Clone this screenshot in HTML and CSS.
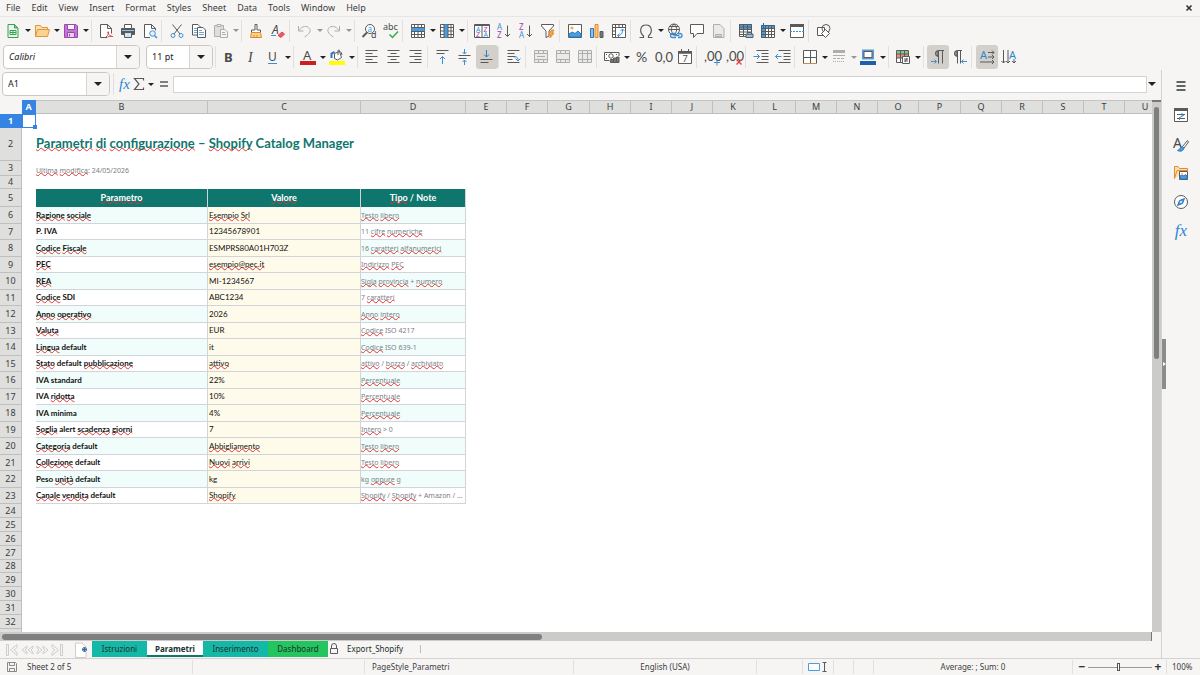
FILE: index.html
```
<!DOCTYPE html>
<html lang="en">
<head>
<meta charset="utf-8">
<meta name="viewport" content="width=device-width, initial-scale=1">
<title>Shopify Catalog Manager</title>
<link rel="stylesheet" href="styles.css">
</head>
<body>
<nav class="menubar">
  <button>File</button><button>Edit</button><button>View</button><button>Insert</button><button>Format</button><button>Styles</button><button>Sheet</button><button>Data</button><button>Tools</button><button>Window</button><button>Help</button>
  <button class="close" aria-label="Close"><svg viewBox="0 0 8 8" width="8" height="8"><path d="M1.500 1.500l5 5M6.500 1.500l-5 5" stroke="#2e3436" stroke-width="1.600"/></svg></button>
</nav>

<div class="toolbar standard" role="toolbar" aria-label="Standard">
  <button class="tb" aria-label="New"><svg viewBox="0 0 16 16"><path d="M3 1.500h6.500l3.500 3.500v9.500H3z" fill="#e9f6ec" stroke="#3aa055"/><path d="M9.500 1.500V5H13z" fill="#8fce9f" stroke="#3aa055"/><path d="M5 7.500h6v4H5zM5 9.500h6M8 7.500v4" fill="#fff" stroke="#3aa055"/></svg></button><button class="dd" aria-label="New options"></button>
  <button class="tb" aria-label="Open"><svg viewBox="0 0 16 16"><path d="M1.500 13.500V2.500h5l1.500 2h5.500v2" fill="#fbe0b4" stroke="#e0963a"/><path d="M1.500 13.500l2-7h12l-2 7z" fill="#fbd38f" stroke="#e0963a"/></svg></button><button class="dd" aria-label="Open options"></button>
  <button class="tb" aria-label="Save"><svg viewBox="0 0 16 16"><path d="M1.500 1.500h11.500l1.500 1.500v11.500h-13z" fill="#c277d3" stroke="#9a48ad"/><path d="M4.500 1.500h7v5h-7z" fill="#fff" stroke="#9a48ad"/><path d="M4.500 9.500h7v5h-7z" fill="#e9d0ef" stroke="#9a48ad"/><path d="M6.500 11v2.500" stroke="#9a48ad"/></svg></button><button class="dd" aria-label="Save options"></button>
  <i class="sep wide"></i>
  <button class="tb" aria-label="Export PDF"><svg viewBox="0 0 16 16"><path d="M9 14.500H2.500v-13h7l4 4v5M9.500 1.500v4h4" fill="#fff"/><path d="M8 14c2-1.500 3-4 2.500-5s-1.500.5 0 2 2 2 4 2.500-2-1-5 .5" stroke="#dc4446"/></svg></button>
  <button class="tb" aria-label="Print"><svg viewBox="0 0 16 16"><path d="M4.500 5V1.500h7V5" fill="#fff"/><rect x="1" y="5" width="14" height="7" rx="1" fill="#585858" stroke="none"/><path d="M2 7.500h12" stroke="#8fc1ea"/><path d="M4.500 9.500h7v5h-7z" fill="#cfe4f7"/></svg></button>
  <button class="tb" aria-label="Print preview"><svg viewBox="0 0 16 16"><path d="M8 14.500H2.500v-13h7l4 4v2M9.500 1.500v4h4" fill="#fff"/><circle cx="10.500" cy="10.500" r="2.800" fill="#e3f0fb" stroke="#3a8fd6"/><path d="M12.700 12.700l2.300 2.300" stroke="#3a8fd6" stroke-width="1.500"/></svg></button>
  <i class="sep"></i>
  <button class="tb" aria-label="Cut"><svg viewBox="0 0 16 16"><path d="M3.500 1.500l7.500 9.500M12.500 1.500L5 11"/><circle cx="4" cy="12.500" r="2" stroke="#3a8fd6"/><circle cx="12" cy="12.500" r="2" stroke="#3a8fd6"/></svg></button>
  <button class="tb" aria-label="Copy"><svg viewBox="0 0 16 16"><path d="M1.500 1.500h5.500l3 3v7.500h-8.500z" fill="#fff"/><path d="M3 5.500h4M3 7.500h3M3 9.500h3" stroke="#6aa9de"/><path d="M6.500 4.500H12l2.500 2.500v7.500h-8z" fill="#fff"/><path d="M8 7.500h3M8 9.500h5M8 11.500h5" stroke="#6aa9de"/></svg></button>
  <button class="tb faded" aria-label="Paste" disabled><svg viewBox="0 0 16 16"><path d="M1.500 2.500h9v11h-9z" fill="#c4c4c2"/><path d="M4 1.500h4v2H4z" fill="#eee"/><path d="M7.500 6.500H12l2.500 2.500v5.500h-7z" fill="#f5f5f4"/><path d="M9 9.500h3M9 11.500h4"/></svg></button><button class="dd faded" aria-label="Paste options" disabled></button>
  <i class="sep wide"></i>
  <button class="tb" aria-label="Clone formatting"><svg viewBox="0 0 16 16"><path d="M7 1.500h2V7h3.500v2.500h-9V7H7z" fill="#fff"/><path d="M3.500 9.500L2.500 14.500h11l-1-5z" fill="#fbd38f" stroke="#e58a2b"/><path d="M6 14v-2M9 14v-2" stroke="#e58a2b"/></svg></button>
  <button class="tb" aria-label="Clear formatting"><svg viewBox="0 0 16 16"><text x="2" y="11" font-size="12" font-style="italic" class="ltr">A</text><path d="M1 12.500h5" stroke="#3a8fd6"/><path d="M8 12.500l4-3.500 2.500 2-3.500 3.500z" fill="#f05a60" stroke="#dc4446"/></svg></button>
  <i class="sep"></i>
  <button class="tb faded" aria-label="Undo" disabled><svg viewBox="0 0 16 16"><path d="M1.500 3v5h5M2 7.500C5 3 10 2 12.500 5.500c2 3-1 6-5 8.500"/></svg></button><button class="dd faded" aria-label="Undo options" disabled></button>
  <button class="tb faded" aria-label="Redo" disabled><svg viewBox="0 0 16 16"><path d="M13.500 3v5h-5M13 7.500C10 3 5 2 2.500 5.500c-2 3 1 6 5 8.500"/></svg></button><button class="dd faded" aria-label="Redo options" disabled></button>
  <i class="sep wide"></i>
  <button class="tb" aria-label="Find and replace"><svg viewBox="0 0 16 16"><circle cx="9" cy="6" r="4.500" fill="#fff"/><text x="6.500" y="8.500" font-size="8" fill="#3a8fd6">a</text><path d="M6 9.500L1.500 14" stroke-width="2"/><text x="10" y="15" font-size="9" class="ltr">d</text></svg></button>
  <button class="tb" aria-label="Spelling"><svg viewBox="0 0 16 16"><text x="0" y="7" font-size="9" class="ltr">abc</text><path d="M6.500 11.500l3 3L15 8.500" stroke="#36a853" stroke-width="1.500"/></svg></button>
  <i class="sep"></i>
  <button class="tb" aria-label="Row"><svg viewBox="0 0 16 16"><path d="M1.500 1.500h13v13h-13z" fill="#fff"/><path d="M1.500 4.500h13v4h-13z" fill="#4a9de0" stroke="none"/><path d="M1.500 4.500h13M1.500 8.500h13M1.500 11.500h13M4.500 1.500v3M8 1.500v3M11.500 1.500v3M4.500 8.500v6M8 8.500v6M11.500 8.500v6"/></svg></button><button class="dd" aria-label="Row options"></button>
  <button class="tb" aria-label="Column"><svg viewBox="0 0 16 16"><path d="M1.500 1.500h13v13h-13z" fill="#fff"/><path d="M5 1.500h4v13H5z" fill="#4a9de0" stroke="none"/><path d="M5 1.500v13M9 1.500v13M12 1.500v13M1.500 4.500H5M1.500 8H5M1.500 11.500H5M9 4.500h5.500M9 8h5.500M9 11.500h5.500"/></svg></button><button class="dd" aria-label="Column options"></button>
  <i class="sep wide"></i>
  <button class="tb" aria-label="Sort"><svg viewBox="0 0 16 16"><path d="M.5 1.500h15v13H.5zM8 3v11.500M.5 2.500h15" fill="#fff"/><text x="2" y="8.500" font-size="7" fill="#3a8fd6">A</text><text x="2" y="14" font-size="7" fill="#a040b0">Z</text><text x="9.500" y="8.500" font-size="7" fill="#a040b0">Z</text><text x="9.500" y="14" font-size="7" fill="#3a8fd6">A</text></svg></button>
  <button class="tb" aria-label="Sort ascending"><svg viewBox="0 0 16 16"><text x="1" y="7" font-size="8" fill="#3a8fd6">A</text><text x="1" y="15" font-size="8" fill="#a040b0">Z</text><path d="M11.500 2.500v11M9 11l2.500 2.500L14 11"/></svg></button>
  <button class="tb" aria-label="Sort descending"><svg viewBox="0 0 16 16"><text x="1" y="7" font-size="8" fill="#a040b0">Z</text><text x="1" y="15" font-size="8" fill="#3a8fd6">A</text><path d="M11.500 2.500v11M9 11l2.500 2.500L14 11"/></svg></button>
  <button class="tb" aria-label="AutoFilter"><svg viewBox="0 0 16 16"><path d="M1.500 1.500h12v1.500l-4.500 5v5l-3 1.500V8L1.500 3z" fill="#fff"/><path d="M11.500 7l-3 5h2l-.5 3 4-5h-2l2-3z" fill="#f7a944" stroke="#e58a2b"/></svg></button>
  <i class="sep"></i>
  <button class="tb" aria-label="Image"><svg viewBox="0 0 16 16"><path d="M1.500 1.500h13v13h-13z" fill="#fff"/><circle cx="5" cy="5" r="1.500" fill="#f7a944" stroke="none"/><path d="M2 14l0-3 3-2 3 1.500L11 8l3 3v3z" fill="#4a9de0" stroke="#2a78bd"/></svg></button>
  <button class="tb" aria-label="Chart"><svg viewBox="0 0 16 16"><path d="M1.500 5.500h3v9h-3z" fill="#8cc0ee" stroke="#2a78bd"/><path d="M6 1.500h3v13H6z" fill="#fbc77a" stroke="#e58a2b"/><path d="M11 8.500h3v6h-3z" fill="#777"/></svg></button>
  <button class="tb" aria-label="Pivot table"><svg viewBox="0 0 16 16"><path d="M1.500 1.500h13v13h-13zM1.500 4.500h13M4.500 1.500v13M8 1.500v3M11.500 1.500v3M1.500 8h3M1.500 11.500h3" fill="#fff"/><path d="M6.500 12.500c4 0 5-2 5-6M9.500 8l2-2 2 2M8.500 10.500l-2 2 2 2" stroke="#3a8fd6"/></svg></button>
  <i class="sep"></i>
  <button class="tb" aria-label="Special character"><svg viewBox="0 0 16 16"><path d="M1.500 14.500h4v-1.500C1 9 2 2 8 2s7 7 2.500 11v1.500h4" stroke-width="1.200"/></svg></button><button class="dd" aria-label="Special character options"></button>
  <button class="tb" aria-label="Hyperlink"><svg viewBox="0 0 16 16"><circle cx="7" cy="6.500" r="5.500"/><path d="M1.500 6.500h11M2.500 3.500h9M7 1c-4 4-3 8 0 11M7 1c4 4 3 8 0 11"/><path d="M9 10.500H5.500a2 2 0 000 4H9M11 10.500h2a2 2 0 010 4h-2M7.500 12.500h5" stroke="#3a8fd6" stroke-width="1.300"/></svg></button>
  <button class="tb" aria-label="Comment"><svg viewBox="0 0 16 16"><path d="M1.500 1.500h13v9H8l-3.500 4v-4h-3z" fill="#fff"/></svg></button>
  <button class="tb faded" aria-label="Header and footer" disabled><svg viewBox="0 0 16 16"><path d="M2.500 1.500H9l4 4v9H2.500z" fill="#ddd"/><path d="M4.500 11.500h6v2h-6z" fill="#bbb"/></svg></button>
  <i class="sep"></i>
  <button class="tb" aria-label="Print area"><svg viewBox="0 0 16 16"><path d="M1.500 1.500h12v12h-12z" fill="#fff"/><path d="M1.500 1.500h12v5h-12z" fill="#4a9de0"/><path d="M1.500 4h12M1.500 6.500h12M1.500 9h12M1.500 11.500h12M5.500 1.500v12M9.500 1.500v12"/><path d="M8 11h7v3.500H8z" fill="#8fc1ea"/><path d="M9.500 9.500h4V11h-4z" fill="#fff"/></svg></button>
  <button class="tb" aria-label="Freeze rows and columns"><svg viewBox="0 0 16 16"><path d="M1.500 2.500h13v12h-13z" fill="#fff"/><path d="M1.500 2.500h13v3h-9v9h-4z" fill="#4a9de0"/><path d="M1.500 5.500h13M1.500 8.500h13M1.500 11.500h13M5.500 2.500v12M8.500 2.500v12M11.500 2.500v12"/><path d="M3.500 0v5M1 2.500h5" stroke="#1f6cb0"/></svg></button><button class="dd" aria-label="Freeze options"></button>
  <button class="tb" aria-label="Split window"><svg viewBox="0 0 16 16"><path d="M1.500 1.500h13v13h-13z" fill="#fff"/><path d="M1 2.500h14" stroke-width="3"/><path d="M1 8.500h14" stroke="#3a8fd6" stroke-dasharray="2 1"/></svg></button>
  <i class="sep"></i>
  <button class="tb" aria-label="Show draw functions"><svg viewBox="0 0 16 16"><path d="M1.500 4.500h7v8h-7z" fill="#fff"/><circle cx="10" cy="5.500" r="4"/><path d="M9.500 6.500l4 4-4 4-4-4z" fill="#fff"/></svg></button>
</div>

<div class="toolbar formatting" role="toolbar" aria-label="Formatting">
  <div class="combo fontname"><input type="text" value="Calibri" aria-label="Font name"><button aria-label="Font list"></button></div>
  <div class="combo fontsize"><input type="text" value="11 pt" aria-label="Font size"><button aria-label="Font size list"></button></div>
  <i class="sep"></i>
  <button class="tb" aria-label="Bold"><svg viewBox="0 0 16 16"><text x="3" y="13" font-size="13" font-weight="700" class="ltr">B</text></svg></button>
  <button class="tb" aria-label="Italic"><svg viewBox="0 0 16 16"><text x="5" y="13" font-size="14" font-style="italic" class="ltr serif">I</text></svg></button>
  <button class="tb" aria-label="Underline"><svg viewBox="0 0 16 16"><text x="3" y="12" font-size="12" class="ltr">U</text><path d="M3 14.500h9" stroke="#3a8fd6"/></svg></button><button class="dd" aria-label="Underline options"></button>
  <i class="sep wide"></i>
  <button class="tb" aria-label="Font color"><svg viewBox="0 0 16 16"><text x="3" y="11" font-size="13" class="ltr">A</text><path d="M0 14h16" stroke="#c9211e" stroke-width="4"/></svg></button><button class="dd" aria-label="Font color options"></button>
  <button class="tb" aria-label="Highlighting color"><svg viewBox="0 0 16 16"><path d="M5.500 4.500l5-2 2 6-4 2.500-3-1.500z" fill="#fff"/><path d="M9 6V1.500c1-1 2 0 2 1.500M12 3l1 3"/><path d="M2.500 9V4.500l3-1.500" stroke="#2a78bd" stroke-width="2"/><path d="M0 14h16" stroke="#ffff00" stroke-width="4"/></svg></button><button class="dd" aria-label="Highlighting options"></button>
  <i class="sep wide"></i>
  <button class="tb" aria-label="Align left"><svg viewBox="0 0 16 16"><path d="M1.500 1.500h12M1.500 4.500h7M1.500 7.500h12M1.500 10.500h7M1.500 13.500h12"/></svg></button>
  <button class="tb" aria-label="Center"><svg viewBox="0 0 16 16"><path d="M1.500 1.500h12M4.500 4.500h6M1.500 7.500h12M4.500 10.500h6M1.500 13.500h12"/></svg></button>
  <button class="tb" aria-label="Align right"><svg viewBox="0 0 16 16"><path d="M1.500 1.500h12M6.500 4.500h7M1.500 7.500h12M6.500 10.500h7M1.500 13.500h12"/></svg></button>
  <i class="sep"></i>
  <button class="tb" aria-label="Align top"><svg viewBox="0 0 16 16"><path d="M1.500 1.500h12M1.500 4.500h8"/><path d="M7.500 15V7.500M5 10l2.500-2.500L10 10" stroke="#3a8fd6"/></svg></button>
  <button class="tb" aria-label="Center vertically"><svg viewBox="0 0 16 16"><path d="M1.500 6.500h12M1.500 9.500h8"/><path d="M7.500 0v5M5.500 3l2 2 2-2M7.500 16v-5M5.500 13l2-2 2 2" stroke="#3a8fd6"/></svg></button>
  <button class="tb on" aria-label="Align bottom" aria-pressed="true"><svg viewBox="0 0 16 16"><path d="M1.500 10.500h12M1.500 13.500h8"/><path d="M7.500 1v7M5 5.500L7.500 8 10 5.500" stroke="#2a78bd"/></svg></button>
  <i class="sep"></i>
  <button class="tb" aria-label="Wrap text"><svg viewBox="0 0 16 16"><path d="M1.500 1.500h12M1.500 4.500h7M1.500 7.500h8M1.500 10.500h5M1.500 13.500h12"/><path d="M8 8c3-1 4 1 4 3M9.500 9.500l2.500 2.500 2.500-2.500" stroke="#3a8fd6"/></svg></button>
  <i class="sep"></i>
  <button class="tb faded" aria-label="Merge and center" disabled><svg viewBox="0 0 16 16"><path d="M1.500 1.500h13v12h-13zM1.500 4.500h13v6h-13zM5.500 1.500v3M10.500 1.500v3M5.500 10.500v3M10.500 10.500v3M4 7.500h8" fill="#ddd"/></svg></button>
  <button class="tb faded" aria-label="Merge cells" disabled><svg viewBox="0 0 16 16"><path d="M1.500 1.500h13v12h-13zM1.500 4.500h13v6h-13zM5.500 1.500v3M10.500 1.500v3M5.500 10.500v3M10.500 10.500v3" fill="#ddd"/></svg></button>
  <button class="tb faded" aria-label="Unmerge cells" disabled><svg viewBox="0 0 16 16"><path d="M1.500 1.500h13v12h-13zM1.500 4.500h13v6h-13zM5.500 1.500v12M10.500 1.500v12" fill="#ddd"/></svg></button>
  <i class="sep"></i>
  <button class="tb" aria-label="Currency"><svg viewBox="0 0 16 16"><path d="M15 7V3.500H.5v8h5" fill="#fff"/><circle cx="7" cy="7" r="2.200"/><path d="M2 5.500h1M2 9.500h1M12 5.500h1"/><path d="M6.500 10.500h3v3h-3zM9.500 9h3v4.500h-3zM12.500 8H15v5.500h-2.500z" fill="#777"/></svg></button><button class="dd" aria-label="Currency options"></button>
  <button class="tb" aria-label="Percent"><svg viewBox="0 0 16 16"><text x="3" y="13" font-size="14" class="ltr lato">%</text></svg></button>
  <button class="tb" aria-label="Number"><svg viewBox="0 0 16 16"><text x="0" y="13" font-size="13" class="ltr lato">0,0</text></svg></button>
  <button class="tb" aria-label="Date"><svg viewBox="0 0 16 16"><path d="M1.500 2.500h13v12h-13z" fill="#fff"/><path d="M1 3.500h14" stroke-width="2.500"/><path d="M4.500 0v3M11.500 0v3"/><text x="5.500" y="13" font-size="9" class="ltr lato">7</text></svg></button>
  <i class="sep"></i>
  <button class="tb" aria-label="Add decimal place"><svg viewBox="0 0 16 16"><text x="0" y="12" font-size="13" class="ltr lato">,00</text><path d="M10 13.500h6M13 10.500v6" stroke="#3a8fd6"/></svg></button>
  <button class="tb" aria-label="Delete decimal place"><svg viewBox="0 0 16 16"><text x="0" y="12" font-size="13" class="ltr lato">,00</text><path d="M10.500 10.500l5 5M15.500 10.500l-5 5" stroke="#e03e3e" stroke-width="1.300"/></svg></button>
  <i class="sep"></i>
  <button class="tb" aria-label="Increase indent"><svg viewBox="0 0 16 16"><path d="M3.500 1.500h12M8.500 4.500h7M8.500 7.500h7M8.500 10.500h7M3.500 13.500h12"/><path d="M.5 7.500h6M4 5l2.500 2.500L4 10" stroke="#3a8fd6"/></svg></button>
  <button class="tb" aria-label="Decrease indent"><svg viewBox="0 0 16 16"><path d="M3.500 1.500h12M8.500 4.500h7M8.500 7.500h7M8.500 10.500h7M3.500 13.500h12"/><path d="M.5 7.500h6M3 5L.5 7.500 3 10" stroke="#3a8fd6"/></svg></button>
  <i class="sep"></i>
  <button class="tb" aria-label="Borders"><svg viewBox="0 0 16 16"><path d="M1.500 1.500h13v13h-13zM8.500 1.500v13M1.500 8.500h13" fill="#fff"/><path d="M1 14.500h14" stroke="#c98a50"/></svg></button><button class="dd" aria-label="Border options"></button>
  <button class="tb faded" aria-label="Border style" disabled><svg viewBox="0 0 16 16"><path d="M2 2.500h12" stroke-width="3"/><path d="M2 6.500h12"/><path d="M2 9.500h12" stroke-dasharray="3 1"/><path d="M2 12.500h12" stroke-dasharray="1 1"/></svg></button><button class="dd faded" aria-label="Border style options" disabled></button>
  <button class="tb" aria-label="Border color"><svg viewBox="0 0 16 16"><path d="M3 1.500h10v8H3z" fill="#fff" stroke="#5a9bd5" stroke-width="2"/><path d="M4 2.500h8v6H4z"/><path d="M0 14h16" stroke="#1f5fa5" stroke-width="4"/></svg></button><button class="dd" aria-label="Border color options"></button>
  <i class="sep wide"></i>
  <button class="tb" aria-label="Conditional formatting"><svg viewBox="0 0 16 16"><path d="M1.500 1.500h12v12h-12z" fill="#fff"/><path d="M2 2h11v3H2z" fill="#7cc98f" stroke="none"/><path d="M2 5h11v4H2z" fill="#ee8a80" stroke="none"/><path d="M1.500 5h12M1.500 9h12M5.500 1.500v12M9.500 1.500v12"/><path d="M7.500 7.500h7v7h-7z" fill="#fff"/><path d="M9 10h4M9 12h4M12 9l-2 4"/></svg></button><button class="dd" aria-label="Conditional options"></button>
  <i class="sep wide"></i>
  <button class="tb on" aria-label="Left to right" aria-pressed="true"><svg viewBox="0 0 16 16"><path d="M14 1.500H8.500a3 3 0 000 6M8.500 1.500v13M12.500 1.500v13"/><path d="M8 2v5a2.500 2.500 0 010-5z" fill="#999"/><path d="M1 12.500h5.500M4.500 10.500l2 2-2 2" stroke="#3a8fd6"/></svg></button>
  <button class="tb" aria-label="Right to left"><svg viewBox="0 0 16 16"><path d="M10 1.500H5.500a3 3 0 000 6M5.500 1.500v13M8.500 1.500v13"/><path d="M5 2v5a2.500 2.500 0 010-5z" fill="#999"/><path d="M9.500 12.500H15M11.500 10.500l-2 2 2 2" stroke="#3a8fd6"/></svg></button>
  <i class="sep"></i>
  <button class="tb on" aria-label="Horizontal text" aria-pressed="true"><svg viewBox="0 0 16 16"><text x="1" y="10" font-size="11" fill="#2a88d0">A</text><path d="M9 3.500h6M13 1.500l2 2-2 2M9 8h6M13 6l2 2-2 2M1 13h14M13 11l2 2-2 2"/></svg></button>
  <button class="tb" aria-label="Vertical text"><svg viewBox="0 0 16 16"><text x="8" y="10" font-size="11" fill="#2a88d0">A</text><path d="M2.500 1v13M.5 12l2 2 2-2M7 1v13M5 12l2 2 2-2M13 10v4M11 12l2 2 2-2"/></svg></button>
</div>

<div class="workspace">
  <main class="document">
    <div class="formulabar">
      <div class="combo namebox"><input type="text" value="A1" aria-label="Name box"><button aria-label="Cell names"></button></div>
      <i class="sep"></i>
      <button class="fx" aria-label="Function wizard">fx</button>
      <button class="fb" aria-label="Select function"><svg viewBox="0 0 12 14" width="12" height="14"><path d="M10.500 3.500v-2H1.500L6 7l-4.500 5.500h9v-2" stroke-width="1.200"/></svg></button><button class="dd" aria-label="Function options"></button>
      <button class="fb eq" aria-label="Formula"><svg viewBox="0 0 10 8" width="10" height="8"><path d="M1 2h8M1 6h8" stroke-width="1.500"/></svg></button>
      <input class="formula" type="text" aria-label="Input line">
      <button class="expand" aria-label="Expand formula bar"></button>
    </div>
    <div class="sheet">
      <div class="viewport">
      <table class="grid">
        <colgroup><col class="rh"><col class="ca"><col class="cb"><col class="cc"><col class="cd"><col class="n"><col class="n"><col class="w"><col class="n"><col class="n"><col class="n"><col class="n"><col class="w"><col class="n"><col class="n"><col class="n"><col class="w"><col class="n"><col class="n"><col class="n"><col class="n"><col class="n"></colgroup>
        <thead><tr><th class="corner"></th><th class="sel">A</th><th>B</th><th>C</th><th>D</th><th>E</th><th>F</th><th>G</th><th>H</th><th>I</th><th>J</th><th>K</th><th>L</th><th>M</th><th>N</th><th>O</th><th>P</th><th>Q</th><th>R</th><th>S</th><th>T</th><th>U</th></tr></thead>
        <tbody>
        <tr class="plain"><th class="sel">1</th><td class="cursor"></td><td colspan="20"></td></tr>
        <tr class="title"><th>2</th><td></td><td colspan="20"><u>Parametri</u> <u>di</u> <u>configurazione</u> – <u>Shopify</u> Catalog Manager</td></tr>
        <tr class="stamp"><th>3</th><td></td><td colspan="20"><u>Ultima</u> <u>modifica</u>: 24/05/2026</td></tr>
        <tr class="plain"><th>4</th><td></td><td colspan="20"></td></tr>
        <tr class="head"><th>5</th><td></td><td><u>Parametro</u></td><td><u>Valore</u></td><td><u>Tipo</u> / Note</td></tr>
        <tr class="rec"><th>6</th><td></td><td><u>Ragione</u> <u>sociale</u></td><td><u>Esempio</u> <u>Srl</u></td><td><u>Testo</u> <u>libero</u></td></tr>
        <tr class="rec"><th>7</th><td></td><td>P. IVA</td><td>12345678901</td><td>11 <u>cifre</u> <u>numeriche</u></td></tr>
        <tr class="rec"><th>8</th><td></td><td><u>Codice</u> <u>Fiscale</u></td><td>ESMPRS80A01H703Z</td><td>16 <u>caratteri</u> <u>alfanumerici</u></td></tr>
        <tr class="rec"><th>9</th><td></td><td><u>PEC</u></td><td><u>esempio@pec.it</u></td><td><u>Indirizzo</u> <u>PEC</u></td></tr>
        <tr class="rec"><th>10</th><td></td><td><u>REA</u></td><td>MI-1234567</td><td><u>Sigla</u> <u>provincia</u> + <u>numero</u></td></tr>
        <tr class="rec"><th>11</th><td></td><td><u>Codice</u> SDI</td><td>ABC1234</td><td>7 <u>caratteri</u></td></tr>
        <tr class="rec"><th>12</th><td></td><td><u>Anno</u> <u>operativo</u></td><td>2026</td><td><u>Anno</u> <u>intero</u></td></tr>
        <tr class="rec"><th>13</th><td></td><td><u>Valuta</u></td><td>EUR</td><td><u>Codice</u> ISO 4217</td></tr>
        <tr class="rec"><th>14</th><td></td><td><u>Lingua</u> default</td><td>it</td><td><u>Codice</u> ISO 639-1</td></tr>
        <tr class="rec"><th>15</th><td></td><td><u>Stato</u> default <u>pubblicazione</u></td><td><u>attivo</u></td><td><u>attivo</u> / <u>bozza</u> / <u>archiviato</u></td></tr>
        <tr class="rec"><th>16</th><td></td><td>IVA standard</td><td>22%</td><td><u>Percentuale</u></td></tr>
        <tr class="rec"><th>17</th><td></td><td>IVA <u>ridotta</u></td><td>10%</td><td><u>Percentuale</u></td></tr>
        <tr class="rec"><th>18</th><td></td><td>IVA minima</td><td>4%</td><td><u>Percentuale</u></td></tr>
        <tr class="rec"><th>19</th><td></td><td><u>Soglia</u> alert <u>scadenza</u> <u>giorni</u></td><td>7</td><td><u>Intero</u> &gt; 0</td></tr>
        <tr class="rec"><th>20</th><td></td><td><u>Categoria</u> default</td><td><u>Abbigliamento</u></td><td><u>Testo</u> <u>libero</u></td></tr>
        <tr class="rec"><th>21</th><td></td><td><u>Collezione</u> default</td><td><u>Nuovi</u> <u>arrivi</u></td><td><u>Testo</u> <u>libero</u></td></tr>
        <tr class="rec"><th>22</th><td></td><td>Peso <u>unità</u> default</td><td>kg</td><td>kg <u>oppure</u> g</td></tr>
        <tr class="rec"><th>23</th><td></td><td><u>Canale</u> <u>vendita</u> default</td><td><u>Shopify</u></td><td><u>Shopify</u> / <u>Shopify</u> + Amazon / ...</td></tr>
        <tr class="plain"><th>24</th><td colspan="21"></td></tr>
        <tr class="plain"><th>25</th><td colspan="21"></td></tr>
        <tr class="plain"><th>26</th><td colspan="21"></td></tr>
        <tr class="plain"><th>27</th><td colspan="21"></td></tr>
        <tr class="plain"><th>28</th><td colspan="21"></td></tr>
        <tr class="plain"><th>29</th><td colspan="21"></td></tr>
        <tr class="plain"><th>30</th><td colspan="21"></td></tr>
        <tr class="plain"><th>31</th><td colspan="21"></td></tr>
        <tr class="plain"><th>32</th><td colspan="21"></td></tr>
        <tr class="plain"><th></th><td colspan="21"></td></tr>
        </tbody>
      </table>
      </div>
      <div class="vscroll"><div class="thumb"></div></div>
    </div>
    <div class="hscroll"><div class="thumb"></div></div>
    <div class="tabs">
      <div class="tabnav">
        <button aria-label="First sheet"><svg viewBox="0 0 14 14"><path d="M1.500 1.500h2v11h-2zM12 1.500L5.500 7l6.500 5.500V9.500L9 7l3-2.500z"/></svg></button>
        <button aria-label="Previous sheet"><svg viewBox="0 0 14 14"><path d="M7 3L2 7l5 4V9L5 7l2-2zM13 3L8 7l5 4V9l-2-2 2-2z"/></svg></button>
        <button aria-label="Next sheet"><svg viewBox="0 0 14 14"><path d="M2 3l5 4-5 4V9l2-2-2-2zM8 3l5 4-5 4V9l2-2-2-2z"/></svg></button>
        <button aria-label="Last sheet"><svg viewBox="0 0 14 14"><path d="M10.500 1.500h2v11h-2zM2 1.500L8.500 7 2 12.500V9.500L5 7 2 4.500z"/></svg></button>
      </div>
      <button class="addsheet" aria-label="Add sheet"><svg viewBox="0 0 14 16"><path d="M1.500 1H8l4 4v10.500H1.500z" fill="#fff" stroke="#ccc"/><circle cx="10.500" cy="7.500" r="2" stroke="#3465a4" fill="#fff"/><path d="M8.500 7.500h4M10.500 5.500v4" stroke="#3465a4"/></svg></button>
      <button class="tab teal t1">Istruzioni</button>
      <button class="tab current t2">Parametri</button>
      <button class="tab teal t3">Inserimento</button>
      <button class="tab green t4">Dashboard</button>
      <button class="tab locked t5"><svg viewBox="0 0 10 12" width="10" height="12"><path d="M1.500 5.500h7v5h-7zM2.500 5.500V3a2.500 2.500 0 015 0v2.500"/></svg>Export_Shopify</button>
    </div>
  </main>
  <aside class="sidebar">
    <button aria-label="Sidebar settings"><svg viewBox="0 0 16 16"><path d="M3.500 4h9M3.500 8h9M3.500 12h9" stroke="#2e3436" stroke-width="1.600"/></svg></button>
    <button aria-label="Properties"><svg viewBox="0 0 16 16"><path d="M1.500 1.500h13v13h-13z" fill="#fff"/><path d="M1 2.500h14" stroke-width="3"/><path d="M4 7.500h8M4 11.500h8"/><path d="M9 6v3M6.500 10v3M6 11l5-3" stroke="#3a8fd6"/></svg></button>
    <button aria-label="Styles"><svg viewBox="0 0 16 16"><text x="0" y="12" font-size="14" class="ltr">A</text><path d="M14.500 4.500l-5 6 1.500 1.500 4.500-6z" fill="#fff"/><path d="M9.500 10.500c-2 0-2 3-5 4 3 1.500 6 .5 6.500-2.500z" fill="#4a9de0" stroke="#2a78bd"/></svg></button>
    <button aria-label="Gallery"><svg viewBox="0 0 16 16"><path d="M1.500 13.500v-12H5l1.500 2h8V6M1.500 13.500L4 5.500h10" fill="#fbe0b4" stroke="#e58a2b"/><path d="M6.500 6.500h8v8h-8z" fill="#fff"/><path d="M7 14v-3l2-1 2 1 1.500-1.500L14 11v3z" fill="#4a9de0" stroke="#2a78bd"/><circle cx="9" cy="8.500" r=".8" fill="#f7a944" stroke="none"/></svg></button>
    <button aria-label="Navigator"><svg viewBox="0 0 16 16"><circle cx="8" cy="8" r="6.500" fill="#fff"/><path d="M11.500 4.500L9.500 9.500l-5 2 2-5z" fill="#4a9de0" stroke="#2a78bd"/><circle cx="8" cy="8" r=".9" fill="#fff" stroke="none"/></svg></button>
    <button class="fx" aria-label="Functions">fx</button>
    <div class="handle"></div>
  </aside>
</div>

<footer class="status">
  <div class="s-sheet"><svg viewBox="0 0 12 12" width="12" height="12"><path d="M1.500 1.500h8l1 1v8h-9zM3.500 1.500v3h5v-3M3.500 10.500v-3h5v3" stroke="#888"/></svg><span>Sheet 2 of 5</span></div>
  <div></div>
  <div class="s-style">PageStyle_Parametri</div>
  <div class="mid">English (USA)</div>
  <div></div>
  <div class="s-mode"><svg viewBox="0 0 22 12" width="22" height="12"><path d="M1.500 2.500h11v7h-11z" fill="#fff" stroke="#4a9de0"/><path d="M15.500 1.500h4M17.500 1.500v9M15.500 10.500h4"/></svg></div>
  <div></div>
  <div></div>
  <div class="mid">Average: ; Sum: 0</div>
  <div class="zoom"><button aria-label="Zoom out">−</button><input type="range" min="0" max="100" value="48" aria-label="Zoom"><button aria-label="Zoom in">+</button></div>
  <div class="s-pct">100%</div>
</footer>
</body>
</html>
```
FILE: styles.css
```
* { box-sizing: border-box; }
html, body { height: 100%; }
body {
  margin: 0;
  display: flex;
  flex-direction: column;
  overflow: hidden;
  background: #f6f5f4;
  color: #3a3d3e;
  font: 9px/12px "Noto Sans", sans-serif;
}
button, input { font: inherit; color: inherit; margin: 0; padding: 0; border: 0; background: none; }
svg { display: block; fill: none; stroke: #5a5a5a; stroke-width: 1; overflow: visible; }
svg text { stroke: none; font-family: "Noto Sans", sans-serif; }
svg .ltr { fill: #4a4a4a; }
svg .serif { font-family: "Liberation Serif", serif; }
svg .lato { font-family: Lato, sans-serif; }

/* Menu bar */
.menubar { flex: none; display: flex; align-items: center; gap: 11px; height: 17px; padding: 0 7px 0 6px; border-bottom: 1px solid #e6e5e3; }
.menubar .close { margin-left: auto; }

/* Toolbars */
.toolbar { flex: none; display: flex; align-items: center; padding-left: 2px; }
.standard { height: 27px; }
.formatting { height: 26px; padding-left: 3px; }
.tb { flex: none; display: grid; place-items: center; width: 22px; height: 24px; border-radius: 3px; }
.tb svg { width: 16px; height: 16px; }
.tb.on { background: #d3d0cc; }
.faded { opacity: .45; }
.dd { flex: none; display: grid; place-items: center; width: 7px; height: 22px; }
.dd::after, .expand::after, .combo button::after { content: ""; border: 3px solid transparent; border-top: 3px solid #222; border-bottom: 0; }
.sep { flex: none; width: 5px; height: 22px; border-left: 1px solid #e2e0de; }
.sep.wide { width: 4px; margin-left: 2px; }
.combo { display: flex; height: 24px; border: 1px solid #cdc7c2; border-radius: 4px; background: #fff; overflow: hidden; }
.combo input { flex: 1; min-width: 0; padding-left: 5px; color: #222; }
.combo button { display: grid; place-items: center; width: 23px; border-left: 1px solid #d8d4d0; background: #f6f5f4; }
.combo button::after, .expand::after { border-width: 4px 4px 0; }
.fontname { width: 137px; margin-right: 6px; }
.fontname input { font-style: italic; }
.fontsize { width: 67px; margin-right: 2px; }
.formatting .fontsize + .sep { width: 3px; }

/* Document area */
.workspace { flex: 1; min-height: 0; display: flex; }
.document { flex: 1; min-width: 0; display: flex; flex-direction: column; }
.formulabar { flex: none; display: flex; align-items: center; height: 30px; padding: 0 5px 2px 2px; }
.namebox { width: 108px; margin-right: 3px; }
.fx { font: italic 15px/16px "Liberation Serif", serif; color: #2a88d0; }
.formulabar .fx { width: 13px; }
.fb { display: grid; place-items: center; width: 16px; }
.eq { width: 19px; }
.formula { flex: 1; min-width: 0; height: 17px; border: 1px solid #d5d2cf; background: #fff; }
.expand { display: grid; place-items: center; width: 10px; height: 17px; margin-right: -1px; }

.sheet { flex: 1; min-height: 0; display: flex; }
.viewport { flex: 1; min-width: 0; overflow: hidden; background: #fff; }
.grid { table-layout: fixed; width: 1166px; border-spacing: 0; }
.rh { width: 22px; }
.ca { width: 14px; }
.cb { width: 172px; }
.cc { width: 153px; }
.cd { width: 105px; }
.n { width: 41px; }
.w { width: 42px; }
.grid th, .grid td { padding: 0; overflow: hidden; white-space: nowrap; }
.grid th { font-weight: 400; text-align: center; background: #dfdfdd; border-right: 1px solid #bfbfbd; border-bottom: 1px solid #bfbfbd; }
.grid thead th { height: 14px; border-top: 1px solid #c4c4c2; line-height: 10px; }
.grid thead .corner { background: #f6f5f4; border-color: #f6f5f4; }
.grid th.sel, .grid thead th.sel { background: #3584e4; border-color: #3584e4; color: #fff; font-weight: 700; }
.plain { height: 14px; }
.plain:nth-child(n + 4):nth-child(6n + 4) { height: 13px; }
.title { height: 33px; }
.stamp { height: 15px; }
.head { height: 18px; }
.rec { height: 17px; }
.rec:nth-child(odd) { height: 16px; }
.rec:last-child { height: 17px; }
.cursor { border: 1px solid #3584e4; position: relative; }
.grid .cursor { overflow: visible; }
.cursor::after { content: ""; position: absolute; right: -2px; bottom: -2px; width: 4px; height: 4px; background: #3584e4; }
.grid u { text-decoration: underline wavy #e5322d 1px; text-underline-offset: -1px; text-decoration-skip-ink: none; }
.title td { font: 700 13px/18px Lato, sans-serif; color: #0f766e; }
.grid .title td { padding-bottom: 3px; }
.stamp td { font: 7px/10px "Noto Sans", sans-serif; color: #7b8087; vertical-align: bottom; }
.head td, .rec td { font: 8px/11px Lato, sans-serif; }
.head td:nth-child(n + 3) { text-align: center; font-size: 9px; font-weight: 700; color: #fff; background: #0f766e; border-right: 1px solid #d1d5db; }
.grid .head td { padding-bottom: 2px; }
.grid .rec td:nth-child(n + 3) { padding-left: 1px; border-right: 1px solid #d1d5db; border-bottom: 1px solid #d1d5db; color: #111; }
.grid .rec td:nth-child(3) { padding-left: 0; font-weight: 700; }
.rec:nth-child(even) td:nth-child(n + 3) { background: #f0fdfa; }
.grid .rec td:nth-child(4) { background: #fffbeb; }
.grid .rec td:nth-child(5) { padding-left: 0; font: 7px/11px "Noto Sans", sans-serif; color: #7b8087; }

.vscroll { flex: none; width: 9px; padding: 5px 2px 0; background: #cbcbca; border-top: 2px solid #777; }
.vscroll .thumb { height: 48%; border-radius: 3px; background: #7e807f; }
.hscroll { flex: none; height: 9px; margin-right: 9px; padding: 2px 0 1px 2px; background: #cbcbca; border-right: 1px solid #777; }
.hscroll .thumb { width: 47%; height: 6px; border-radius: 3px; background: #7e807f; }

/* Sheet tabs */
.tabs { flex: none; display: flex; height: 17px; padding-left: 5px; font-size: 8px; }
.tabnav { display: flex; align-items: center; width: 69px; }
.tabnav button { width: 15px; }
.tabnav svg { width: 14px; height: 14px; stroke: #cfcdca; }
.addsheet { width: 18px; }
.addsheet svg { width: 14px; height: 16px; }
.tab { text-align: center; height: 16px; color: #20302f; }
.teal { background: #14b8a6; }
.green { background: #22c55e; }
.current { background: #fff; font-weight: 700; padding-top: 2px; border-bottom: 2px solid #0f766e; }
.t1 { width: 55px; }
.t2 { width: 56px; }
.t3 { width: 65px; }
.t4 { width: 60px; }
.t5 { width: 93px; display: flex; align-items: center; gap: 8px; padding-left: 1px; background: linear-gradient(#bbb, #bbb) right / 1px 8px no-repeat; }

/* Sidebar */
.sidebar { flex: none; width: 39px; padding-top: 1px; display: flex; flex-direction: column; align-items: center; border-left: 1px solid #d5d2cf; position: relative; }
.sidebar button { display: grid; place-items: center; width: 24px; height: 29px; }
.sidebar svg { width: 16px; height: 16px; }
.sidebar .fx { font-size: 17px; }
.handle { position: absolute; left: 0; top: 269px; width: 4px; height: 50px; background: #8b8d8c; display: grid; place-items: center; }
.handle::after { content: ""; border: 2px solid transparent; border-left: 3px solid #fff; border-right: 0; }

/* Status bar */
.status {
  flex: none; display: grid; height: 17px; border-top: 1px solid #d5d2cf; font-size: 8px; align-items: center;
  grid-template-columns: 193fr 172fr 209fr 183fr 46px 31px 20px 20px 199fr 94px 33px;
}
.status > div { height: 14px; display: flex; align-items: center; border-right: 1px solid #e2e0de; white-space: nowrap; }
.status > .s-sheet { padding-left: 6px; gap: 9px; }
.status > .s-style { padding-left: 7px; }
.status > .mid, .status > .s-mode { justify-content: center; }
.status > .s-pct { border: 0; padding-left: 5px; }
.zoom { padding: 0 2px 0 3px; }
.zoom button { width: 12px; font-size: 12px; font-weight: 700; line-height: 12px; color: #2e3436; }
.zoom input { appearance: none; flex: 1; min-width: 0; height: 10px; background: linear-gradient(#9a9a98, #9a9a98) center / 100% 1px no-repeat; }
.zoom input::-webkit-slider-thumb { appearance: none; width: 3px; height: 8px; border: 1px solid #555; background: #fff; }
```
